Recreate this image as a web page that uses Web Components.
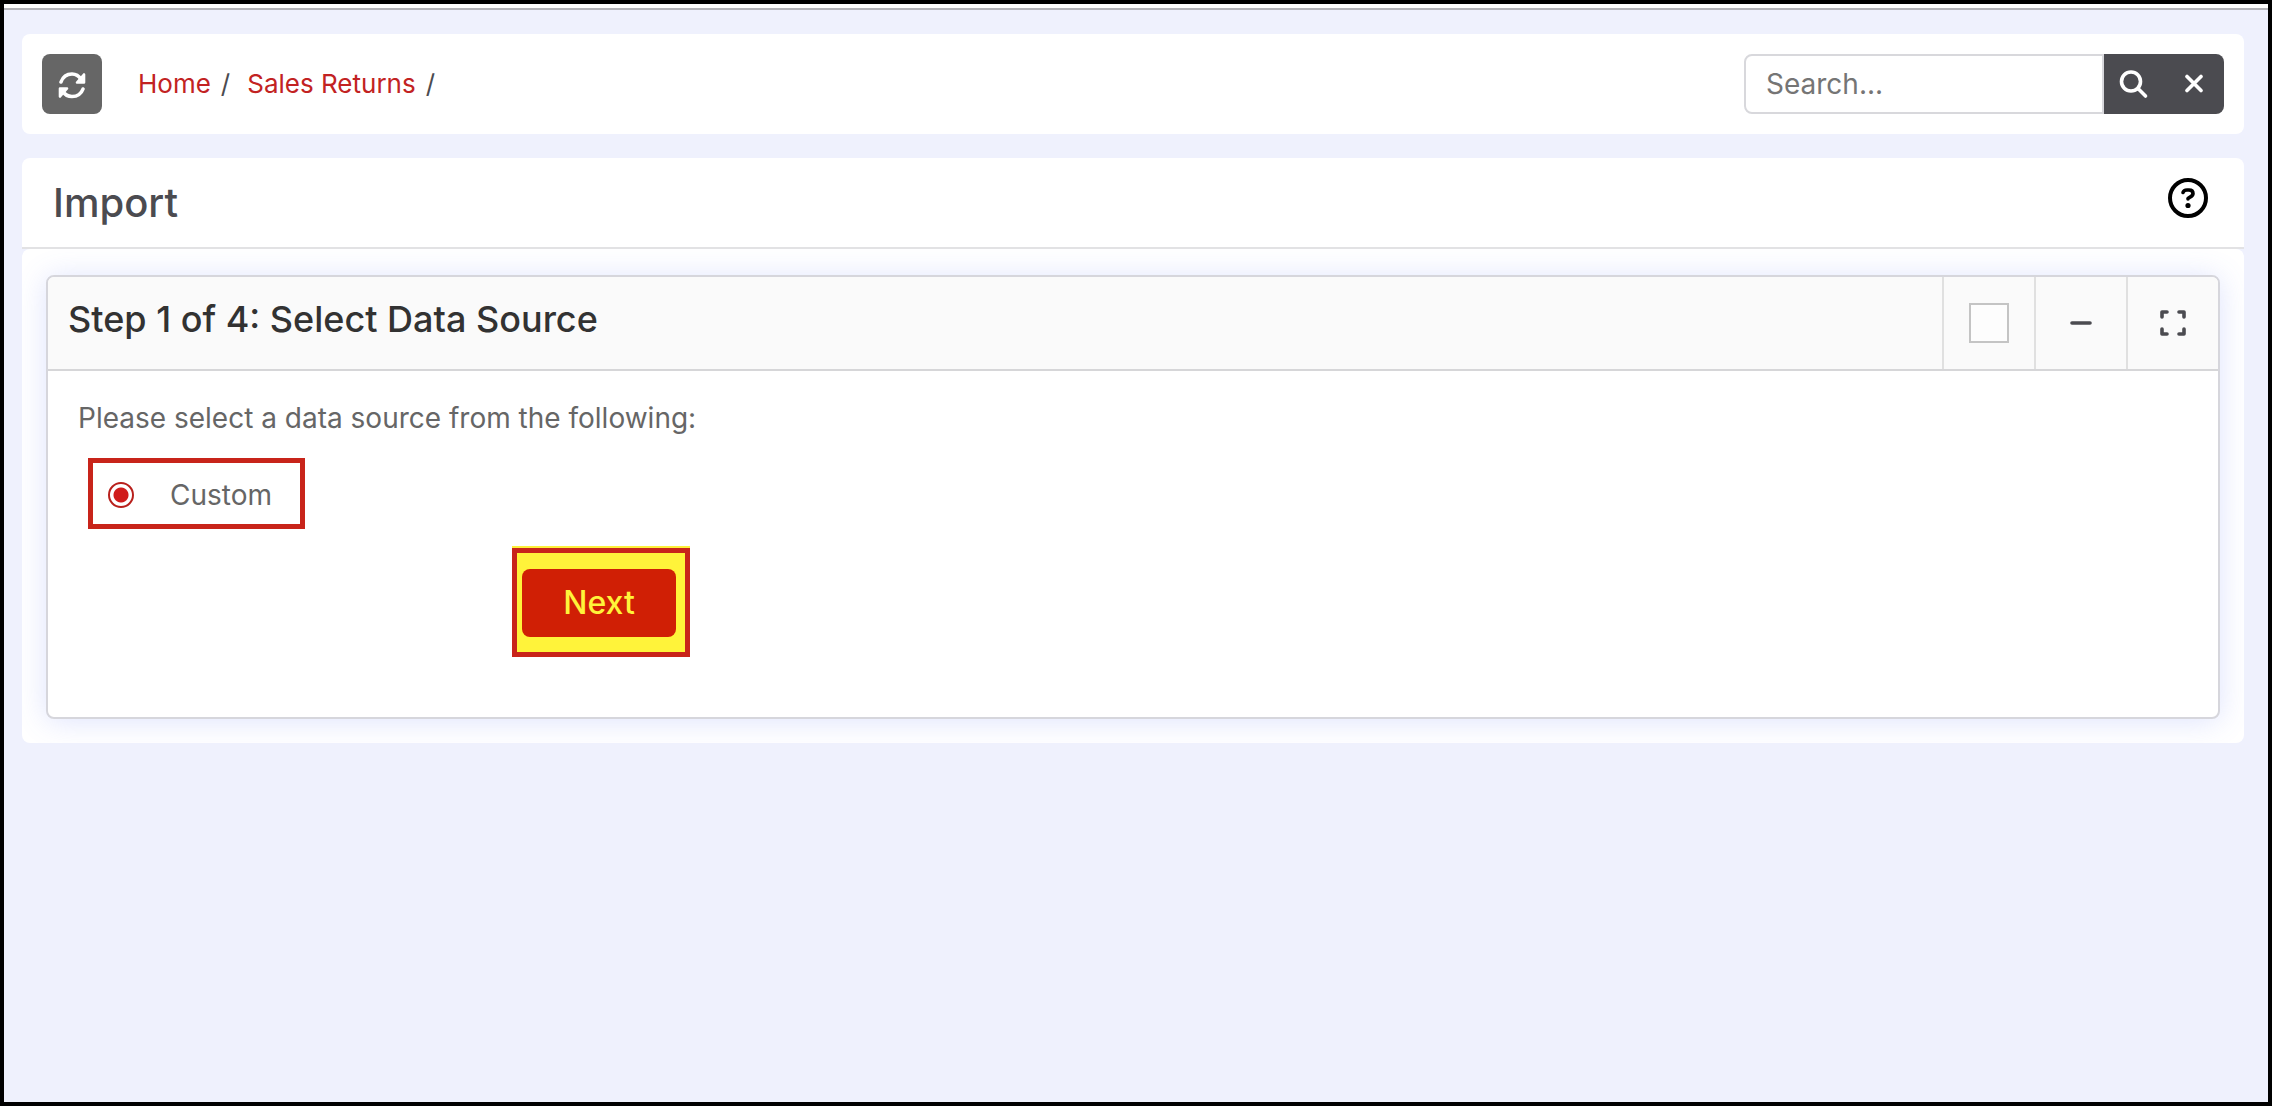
<!DOCTYPE html>
<html lang="en">
<head>
<meta charset="utf-8">
<title>Import</title>
<style>
  * { box-sizing: border-box; }
  body {
    margin: 0;
    min-height: 100vh;
    border: 4px solid #000;
    background: #eff1fd;
    color: #666;
    font: 28px/40px Inter, "Liberation Sans", sans-serif;
  }
</style>
</head>
<body>
<app-page>
  <tool-bar slot="toolbar">
    <bread-crumb>
      <crumb-link href="#home">Home</crumb-link>
      <crumb-link href="#returns">Sales Returns</crumb-link>
    </bread-crumb>
    <search-box slot="end"></search-box>
  </tool-bar>
  <page-title slot="title">Import</page-title>
  <step-card>
    <span slot="title">Step 1 of 4: Select Data Source</span>
    <source-form></source-form>
  </step-card>
</app-page>

<script>
  const define = (name, html) => {
    const template = document.createElement('template');
    template.innerHTML = `<style>
      * { box-sizing: border-box; }
      :host { display: block; }
      button { font: inherit; padding: 0; border: 0; cursor: pointer; }
      svg { display: block; fill: none; stroke-linecap: round; stroke-linejoin: round; }
    </style>` + html;
    customElements.define(name, class extends HTMLElement {
      constructor() {
        super();
        this.attachShadow({ mode: 'open' }).appendChild(template.content.cloneNode(true));
      }
      connectedCallback() {
        const link = this.shadowRoot.querySelector('a');
        if (link && this.hasAttribute('href')) link.href = this.getAttribute('href');
      }
    });
  };

  define('app-page', `
    <style>
      :host { border-top: 4px solid #fff; }
      .page { border-top: 2px solid #b3b3b8; padding: 24px 24px 24px 18px; }
      .content { margin-top: 24px; }
      .panel { background: #fff; border-radius: 8px; padding: 26px 24px 24px; overflow: hidden; }
    </style>
    <div class="page">
      <slot name="toolbar"></slot>
      <main class="content">
        <slot name="title"></slot>
        <div class="panel"><slot></slot></div>
      </main>
    </div>
  `);

  define('tool-bar', `
    <style>
      :host {
        display: flex;
        align-items: center;
        padding: 20px;
        border-radius: 8px;
        background: #fff;
      }
      .refresh {
        display: grid;
        place-items: center;
        width: 60px;
        height: 60px;
        margin-right: 36px;
        border-radius: 8px;
        background: #666;
        color: #fff;
      }
      .end { margin-left: auto; }
    </style>
    <button class="refresh" aria-label="Refresh">
      <svg width="28" height="32" viewBox="0 0 28 32" stroke="currentColor" stroke-width="3.600">
        <path d="M3 14C5 8.500 9 6 14 6c4.500 0 7 2 9 5.500"/>
        <path d="M26 6.500v8h-7z" stroke-width="2.600" fill="currentColor"/>
        <path d="M25 21C23 26.500 19 28.500 14 28.500c-4.500 0-7-1.700-9-5"/>
        <path d="M2 28.500v-8h7z" stroke-width="2.600" fill="currentColor"/>
      </svg>
    </button>
    <slot></slot>
    <div class="end"><slot name="end"></slot></div>
  `);

  define('bread-crumb', `
    <style>
      nav { display: flex; gap: 17px; }
    </style>
    <nav aria-label="Breadcrumb"><slot></slot></nav>
  `);

  define('crumb-link', `
    <style>
      :host { font-size: 26px; color: #4b4b50; }
      a { color: #c22222; text-decoration: none; margin-right: 10px; }
    </style>
    <a><slot></slot></a><span>/</span>
  `);

  define('search-box', `
    <style>
      form { display: flex; height: 60px; }
      input {
        width: 360px;
        padding: 0 20px;
        border: 2px solid #d8d8dc;
        border-radius: 8px 0 0 8px;
        background: #fff;
        font: inherit;
        outline: 0;
      }
      input::placeholder { color: #757575; opacity: 1; }
      button { display: grid; place-items: center; width: 60px; background: #4b4b50; color: #fff; }
      button:last-child { border-radius: 0 8px 8px 0; }
    </style>
    <form>
      <input type="text" placeholder="Search..." aria-label="Search">
      <button type="button" aria-label="Search">
        <svg width="30" height="30" viewBox="0 0 30 30" stroke="currentColor" stroke-width="3.600">
          <circle cx="12" cy="12.500" r="9.500"/>
          <path d="M19.500 20l7 7"/>
        </svg>
      </button>
      <button type="reset" aria-label="Clear">
        <svg width="20" height="20" viewBox="0 0 20 20" stroke="currentColor" stroke-width="3.600">
          <path d="M3 2.500l14 14M17 2.500l-14 14"/>
        </svg>
      </button>
    </form>
  `);

  define('page-title', `
    <style>
      header {
        display: flex;
        justify-content: space-between;
        align-items: center;
        padding: 20px 36px 21px 31px;
        border-bottom: 2px solid #e2e2e4;
        border-radius: 8px 8px 0 0;
        background: #fff;
      }
      h1 { margin: 0; font-size: 40px; line-height: 50px; font-weight: 500; color: #4b4b50; }
      button { align-self: flex-start; background: none; color: #000; }
      header { padding-bottom: 19px; }
    </style>
    <header>
      <h1><slot></slot></h1>
      <button aria-label="Help">
        <svg width="40" height="40" viewBox="0 0 40 40" stroke="currentColor" stroke-width="4">
          <circle cx="20" cy="20" r="18"/>
          <path d="M15 14.500c.5-1.700 2-2.500 4-2.500h2c2.500 0 4 1.300 4 3.500 0 1.500-1 2.500-2.500 3.300L20 20.500v.5" stroke-width="3.600"/>
          <circle cx="20" cy="27.500" r="2.600" fill="currentColor" stroke="none"/>
        </svg>
      </button>
    </header>
  `);

  define('step-card', `
    <style>
      section {
        border: 2px solid #d6d6dc;
        border-radius: 8px;
        background: #fff;
        box-shadow: 0 2px 30px rgba(90, 115, 245, .2);
      }
      header {
        display: flex;
        height: 94px;
        border-bottom: 2px solid #d6d6d8;
        border-radius: 6px 6px 0 0;
        background: #fafafa;
      }
      h2 {
        flex: 1;
        margin: 0;
        padding: 20px;
        font-size: 36px;
        line-height: 44px;
        font-weight: 500;
        color: #323232;
      }
      .tool {
        display: grid;
        place-items: center;
        width: 92px;
        border-left: 2px solid #e0e0e0;
        background: none;
        color: #4b4b50;
      }
      input {
        appearance: none;
        width: 40px;
        height: 40px;
        margin: 0;
        border: 2px solid #c4c4c4;
        background: #fdfdfd;
      }
    </style>
    <section>
      <header>
        <h2><slot name="title"></slot></h2>
        <label class="tool"><input type="checkbox" aria-label="Pin panel"></label>
        <button class="tool" aria-label="Collapse">
          <svg width="24" height="24" viewBox="0 0 24 24" stroke="currentColor" stroke-width="3.600">
            <path d="M3 12h18"/>
          </svg>
        </button>
        <button class="tool" aria-label="Full screen">
          <svg width="26" height="26" viewBox="0 0 26 26" stroke="currentColor" stroke-width="3.600">
            <path d="M2 7V2h5M19 2h5v5M24 19v5h-5M7 24H2v-5"/>
          </svg>
        </button>
      </header>
      <slot></slot>
    </section>
  `);

  define('source-form', `
    <style>
      form { padding: 27px 30px 60px; }
      p { margin: 0; }
      .choice {
        display: flex;
        align-items: center;
        width: max-content;
        height: 71px;
        margin: 20px 0 0 10px;
        padding: 2px 28px 0 15px;
        border: 5px solid #c8241a;
      }
      label { padding-left: 36px; }
      input {
        appearance: none;
        width: 26px;
        height: 26px;
        margin: 0;
        border: 2px solid #b8201c;
        border-radius: 50%;
        background: radial-gradient(circle, #d01c1c 7px, #fff 8px);
      }
      .actions {
        display: flex;
        width: max-content;
        margin: 17px 0 0 434px;
        border-top: 2px solid #fdf03a;
      }
      .mark { padding: 16px 9px 15px 5px; border: 5px solid #c8241a; background: #fff33a; }
      button {
        width: 154px;
        height: 68px;
        border-radius: 8px;
        background: #d01f05;
        color: #fff33a;
        font-size: 32px;
        font-weight: 500;
      }
    </style>
    <form>
      <p>Please select a data source from the following:</p>
      <div class="choice">
        <input type="radio" id="custom" name="source" checked>
        <label for="custom">Custom</label>
      </div>
      <div class="actions"><div class="mark"><button type="button">Next</button></div></div>
    </form>
  `);
</script>
</body>
</html>
